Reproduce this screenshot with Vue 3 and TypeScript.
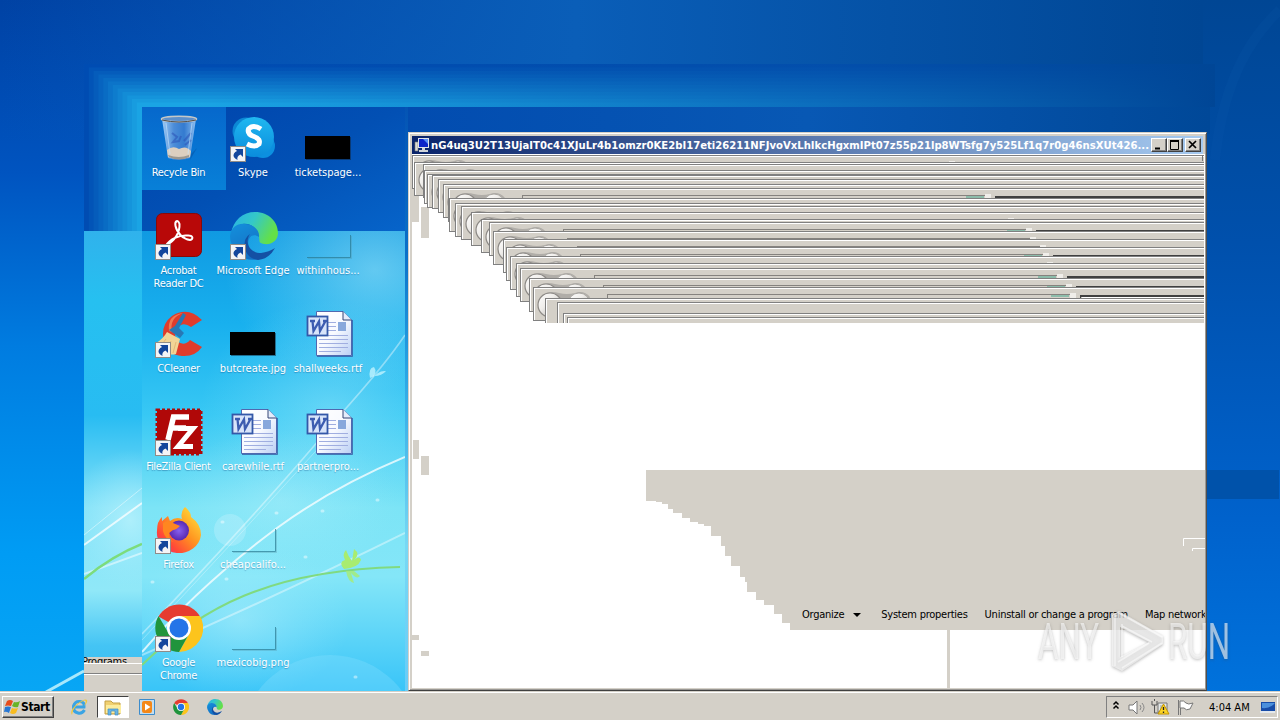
<script setup lang="ts">
interface Shortcut {
  kind: string
  label: string
  linked?: boolean
  selected?: boolean
}

const columns: Shortcut[][] = [
  [
    { kind: 'bin', label: 'Recycle Bin', selected: true },
    { kind: 'acrobat', label: 'Acrobat Reader DC', linked: true },
    { kind: 'ccleaner', label: 'CCleaner', linked: true },
    { kind: 'filezilla', label: 'FileZilla Client', linked: true },
    { kind: 'firefox', label: 'Firefox', linked: true },
    { kind: 'chrome', label: 'Google Chrome', linked: true },
  ],
  [
    { kind: 'skype', label: 'Skype', linked: true },
    { kind: 'edge', label: 'Microsoft Edge', linked: true },
    { kind: 'black', label: 'butcreate.jpg' },
    { kind: 'word', label: 'carewhile.rtf' },
    { kind: 'blank', label: 'cheapcalifo...' },
    { kind: 'blank', label: 'mexicobig.png' },
  ],
  [
    { kind: 'black', label: 'ticketspage...' },
    { kind: 'blank', label: 'withinhous...' },
    { kind: 'word', label: 'shallweeks.rtf' },
    { kind: 'word', label: 'partnerpro...' },
  ],
]

const title =
  'nG4uq3U2T13UjaIT0c41XJuLr4b1omzr0KE2bI17eti26211NFJvoVxLhIkcHgxmIPt07z55p21lp8WTsfg7y525Lf1q7r0g46nsXUt426...'

/* Nested L-shaped bands of the drag trail, from dark outer edge to bright inner edge */
const bands = Array.from({ length: 12 }, (_, i) => {
  const t = i / 11
  const mix = (a: number, b: number) => Math.round(a + (b - a) * t)
  return {
    d: `M${84 + i * 4.8} 231V${64 + i * 3.5}H1215V107H142V231Z`,
    fill: `rgb(${mix(0, 26)}, ${mix(76, 164)}, ${mix(178, 228)})`,
  }
})

/* Leftover frames of the dragged window, relative to the client area */
const frames: [number, number][] = [
  [0, 1], [2, 8], [11, 10], [12, 16], [15, 20], [20, 21], [26, 25], [31, 30], [36, 34],
  [37, 44], [43, 49], [49, 52], [59, 58], [69, 65], [77, 68], [81, 77], [91, 85],
  [94, 93], [98, 102], [104, 109], [108, 114], [117, 124], [121, 133],
]
const bareFrames: [number, number][] = [[133, 144], [145, 148], [151, 159], [155, 163]]

const menu = ['Organize', 'System properties', 'Uninstall or change a program', 'Map network']
</script>

<template>
  <div class="screen">
    <svg class="wallpaper" width="1280" height="692" viewBox="0 0 1280 692">
      <defs>
        <linearGradient id="base" x1="0" y1="0" x2="0" y2="1">
          <stop offset="0" stop-color="#0042a4" />
          <stop offset=".25" stop-color="#0054c0" />
          <stop offset=".5" stop-color="#007ce0" />
          <stop offset=".8" stop-color="#009cf4" />
          <stop offset="1" stop-color="#08a6f4" />
        </linearGradient>
        <linearGradient id="sky" x1="0" y1="0" x2="1" y2="0">
          <stop offset="0" stop-color="#0a60bc" stop-opacity="0" />
          <stop offset=".45" stop-color="#0a5eb8" />
          <stop offset=".94" stop-color="#004694" />
        </linearGradient>
        <linearGradient id="east" x1="0" y1="0" x2="0" y2="1">
          <stop offset="0" stop-color="#004694" />
          <stop offset=".35" stop-color="#0050ac" />
          <stop offset=".75" stop-color="#0062cc" />
          <stop offset="1" stop-color="#0072dc" />
        </linearGradient>
        <linearGradient id="fade" x1="0" y1="0" x2="1" y2="0">
          <stop offset=".1" stop-color="#0450a8" stop-opacity="0" />
          <stop offset=".65" stop-color="#0450a8" stop-opacity=".65" />
          <stop offset="1" stop-color="#004696" />
        </linearGradient>
        <linearGradient id="band" x1="0" y1="0" x2="1" y2="0">
          <stop offset="0" stop-color="#024cb0" />
          <stop offset=".5" stop-color="#0858b4" />
          <stop offset="1" stop-color="#004898" />
        </linearGradient>
        <linearGradient id="strip" x1="0" y1="0" x2="0" y2="1">
          <stop offset="0" stop-color="#30b2ec" />
          <stop offset=".15" stop-color="#26c0f0" />
          <stop offset=".4" stop-color="#28bcf2" />
          <stop offset=".6" stop-color="#84e2f8" />
          <stop offset=".78" stop-color="#90e8f8" />
          <stop offset=".9" stop-color="#44c4f4" />
          <stop offset="1" stop-color="#36bcf0" />
        </linearGradient>
        <linearGradient id="inner" x1="0" y1="0" x2="0" y2="1">
          <stop offset="0" stop-color="#109ae2" />
          <stop offset=".2" stop-color="#18b0ee" />
          <stop offset=".4" stop-color="#38c8f4" />
          <stop offset=".6" stop-color="#7ce4f6" />
          <stop offset=".75" stop-color="#84e6f8" />
          <stop offset="1" stop-color="#38c4f8" />
        </linearGradient>
        <linearGradient id="seam" x1="0" y1="0" x2="0" y2="1">
          <stop offset="0" stop-color="#0454b4" />
          <stop offset=".25" stop-color="#0a70c8" />
          <stop offset=".45" stop-color="#28a4e4" />
          <stop offset=".75" stop-color="#78d8f4" />
          <stop offset="1" stop-color="#68ccf8" />
        </linearGradient>
        <radialGradient id="glow">
          <stop offset="0" stop-color="#b8f2fc" stop-opacity=".8" />
          <stop offset="1" stop-color="#a0ecfc" stop-opacity="0" />
        </radialGradient>
        <linearGradient id="dusk" x1="0" y1="0" x2="1" y2="1">
          <stop offset="0" stop-color="#0044ac" />
          <stop offset=".5" stop-color="#0250b4" />
          <stop offset="1" stop-color="#0664ca" />
        </linearGradient>
        <clipPath id="innerClip"><rect x="142" y="231" width="263" height="461" /></clipPath>
        <clipPath id="stripClip"><rect x="84" y="231" width="58" height="461" /></clipPath>
      </defs>
      <rect width="1280" height="692" fill="url(#base)" />
      <rect width="1280" height="140" fill="url(#sky)" />
      <rect x="1203" width="77" height="692" fill="url(#east)" />
      <path d="M1215 160Q1225 60 1280 10" stroke="#1464b8" stroke-width="10" opacity=".12" fill="none" />
      <rect x="1207" y="470" width="72" height="29" fill="#0052aa" />

      <path v-for="(step, i) in bands" :key="i" :d="step.d" :fill="step.fill" />
      <rect x="84" y="64" width="1131" height="43" fill="url(#fade)" />
      <rect x="405" y="107" width="805" height="27" fill="url(#band)" />

      <rect x="84" y="231" width="58" height="461" fill="url(#strip)" />
      <g clip-path="url(#stripClip)" fill="none" stroke="#fff">
        <ellipse cx="130" cy="520" rx="60" ry="70" fill="url(#glow)" stroke="none" />
        <path d="M84 545L142 503" stroke-width="2" opacity=".75" />
        <path d="M84 535L142 488" opacity=".45" />
        <path d="M84 574L142 553" stroke-width="2" opacity=".5" />
        <path d="M84 579Q112 556 142 544" stroke="#7cdc7c" stroke-width="2.500" />
      </g>
      <path d="M46 692L84 671" stroke="#a8e8fc" stroke-width="3" />

      <rect x="142" y="107" width="263" height="124" fill="url(#dusk)" />
      <rect x="142" y="231" width="263" height="461" fill="url(#inner)" />
      <g clip-path="url(#innerClip)" fill="none" stroke="#fff">
        <ellipse cx="375" cy="270" rx="150" ry="120" fill="url(#glow)" opacity=".6" stroke="none" />
        <ellipse cx="330" cy="410" rx="130" ry="110" fill="url(#glow)" opacity=".45" stroke="none" />
        <ellipse cx="280" cy="500" rx="120" ry="70" fill="url(#glow)" opacity=".5" stroke="none" />
        <ellipse cx="240" cy="620" rx="110" ry="80" fill="url(#glow)" opacity=".6" stroke="none" />
        <circle cx="330" cy="745" r="90" fill="#8ce2ff" opacity=".3" stroke="none" />
        <circle cx="230" cy="530" r="16" fill="#d0f6ff" opacity=".3" stroke="none" />
        <path d="M142 652Q200 585 277 528Q333 487 405 457" stroke-width="2" opacity=".75" />
        <path d="M142 634Q270 500 340 415Q385 365 405 335" stroke-width="1.600" opacity=".4" />
        <path d="M142 640Q240 535 335 430" opacity=".3" />
        <path d="M142 655Q290 590 405 533" stroke-width="2" opacity=".4" />
        <path d="M142 665C200 608 270 570 400 567" stroke="#80da80" stroke-width="2" />
        <g fill="#a8ec70" stroke="none">
          <path d="M344 569Q338 562 345 560Q342 554 346 550Q348 556 352 561L354 549Q361 554 354 560Q360 555 361 560Q358 568 344 569Z" />
          <path d="M346 571Q348 582 354 583L351 573Q357 580 360 576L354 571Z" opacity=".8" />
        </g>
        <path d="M370 378Q368 368 374 367Q378 372 371 380Q378 370 386 371Q382 376 374 376Z" fill="#d0f8ff" opacity=".7" stroke="none" />
        <path d="M222 522h1M276 513h1M305 557h1M226 579h1M322 511h1M377 500h1M152 582h1M355 677h1" stroke-width="3" stroke-linecap="round" opacity=".45" />
      </g>
      <rect x="405" y="107" width="3" height="585" fill="url(#seam)" />
    </svg>

    <svg class="symbols" width="0" height="0">
      <defs>
        <linearGradient id="gSkype" x2="0" y2="1"><stop stop-color="#20b8f0" /><stop offset="1" stop-color="#0a8cdc" /></linearGradient>
        <linearGradient id="gEdge" x2="1" y2=".4"><stop stop-color="#28b0e8" /><stop offset=".5" stop-color="#34c8c8" /><stop offset="1" stop-color="#64e048" /></linearGradient>
        <linearGradient id="gEdgeLow" x2=".5" y2="1"><stop stop-color="#1490dc" /><stop offset="1" stop-color="#1470c4" /></linearGradient>
        <linearGradient id="gFox" x1="1" x2="0" y2="1"><stop stop-color="#fff040" /><stop offset=".45" stop-color="#ff9420" /><stop offset=".75" stop-color="#ff4838" /><stop offset="1" stop-color="#e42090" /></linearGradient>
        <radialGradient id="gPurple"><stop stop-color="#8860f0" /><stop offset="1" stop-color="#5828b0" /></radialGradient>
        <linearGradient id="gBin" x2="1"><stop stop-color="#9ecaf4" /><stop offset=".35" stop-color="#4b8cd8" /><stop offset=".65" stop-color="#347bd0" /><stop offset="1" stop-color="#8abdf0" /></linearGradient>
        <linearGradient id="gPage" x2="1" y2="1"><stop stop-color="#fff" /><stop offset=".5" stop-color="#f8faff" /><stop offset="1" stop-color="#bacff4" /></linearGradient>
        <symbol id="bin" viewBox="0 0 48 48">
          <path d="M36 40L42 34 35 46Z" fill="#05408a" opacity=".35" />
          <path d="M7 5L13 44Q24 48 35 44L41 5Z" fill="url(#gBin)" />
          <path d="M12 36Q18 31 24 35Q31 31 36 37L35 43Q24 47 13 43Z" fill="#dccfc0" />
          <path d="M14 43Q24 48 34 43V41Q24 45 13 41Z" fill="#9c9890" />
          <path d="M17 19l5 4-4 5 6-1 2-5M29 27l7-8M30 31l6-5" stroke="#284cb4" stroke-width="2" fill="none" opacity=".5" />
          <path d="M11 9L15 40M37 9L33 40" stroke="#c8e4fc" opacity=".6" />
          <ellipse cx="24" cy="5" rx="17.500" ry="2.800" fill="#5c90cc" stroke="#c4c8c8" stroke-width="1.600" />
          <path d="M7 6Q24 10 41 6" stroke="#504c48" fill="none" />
        </symbol>
        <symbol id="skype" viewBox="0 0 48 48">
          <circle cx="16" cy="17" r="13.500" fill="#0c88d4" /><circle cx="33" cy="32" r="12" fill="#0c90e0" />
          <circle cx="24" cy="23" r="20" fill="url(#gSkype)" />
          <path d="M31 15Q23 10 18.500 15Q17 20 24 22.500Q31 25 29 30Q25 34 17 30" fill="none" stroke="#fff" stroke-width="5" />
        </symbol>
        <symbol id="acrobat" viewBox="0 0 48 48">
          <rect x="1.500" y="1.500" width="45" height="43" rx="6" fill="#b80808" stroke="#880808" />
          <path d="M11 33.500C20 29 25 20 24.500 12C23 7 19.500 9 20.500 14C22 21 28 27 35 28C39 27 38 23 32 23.500C24 23 15 27 11 33.500Z" fill="none" stroke="#fff" stroke-width="2" />
        </symbol>
        <symbol id="edge" viewBox="0 0 48 48">
          <path d="M1 22C3 8 13 0 25 0C39 0 48 10 48 21C48 29 41 33 34 32C28 31 30 29 29 25C28 16 20 11 13 12Q5 14 1 22Z" fill="url(#gEdge)" />
          <path d="M0 24C1 15 8 11 15 12C24 12 30 19 29 25C22 20 16 27 19 36Q23 44 34 46Q14 52 5 38Q0 31 0 24Z" fill="url(#gEdgeLow)" />
          <path d="M20 22C14 31 20 41 31 41Q39 40 45 36Q39 47 28 48Q16 46 14.500 34Q14 26 20 22Z" fill="#1450a4" />
        </symbol>
        <symbol id="ccleaner" viewBox="0 0 48 48">
          <path d="M47 10L36 17Q28 11 22 18Q18 24 22 31Q29 37 35 30L47 37Q40 47 27 46Q13 45 9 32Q5 15 17 6Q33-4 47 10Z" fill="#e03c2c" />
          <path d="M14 21Q12 5 28 3Q14 8 17 22Z" fill="#f07850" />
          <path d="M12 22L25 29 21 44Q8 47 1 33Q8 29 12 22Z" fill="#f2d496" /><path d="M11 29L5 37M16 31L11 42M21 32L18 43" stroke="#e4b878" />
          <path d="M14 20L25 28 29 23 24 18 31 5 28 3 20 16Z" fill="#2878b4" />
        </symbol>
        <symbol id="filezilla" viewBox="0 0 48 48">
          <rect x="2" y="2" width="44" height="44" fill="#b00808" stroke="#b00808" stroke-width="3" stroke-dasharray="3 2" />
          <path d="M13 32L18.500 9H34M17 20H31" fill="none" stroke="#fff" stroke-width="5.500" />
          <path d="M23 20.500H38L23 38.500H38" fill="none" stroke="#fff" stroke-width="5" />
        </symbol>
        <symbol id="firefox" viewBox="0 0 48 48">
          <path d="M30 1Q36 6 36 11Q46 18 46 29A22 20 0 1 1 2 25Q2 15 7 11V15L13 10L15 15Q21 10 27 13Q25 6 30 1Z" fill="url(#gFox)" />
          <circle cx="24" cy="24.500" r="10" fill="url(#gPurple)" />
          <path d="M8 17Q13 13 18 17L25 20Q21 24 18 24L14 27Q14 34 19 36Q10 34 8 25Z" fill="#ff8620" />
        </symbol>
        <symbol id="chrome" viewBox="0 0 48 48">
          <path d="M24 24L3.500 12.500A24 24 0 0 1 45 12.500Z" fill="#e63c30" />
          <path d="M24 12H45A24 24 0 0 1 24 48L34 30Z" fill="#fcc41c" />
          <path d="M3.500 12A24 24 0 0 0 24 48L34 30 14 30Z" fill="#20943c" />
          <circle cx="24" cy="24" r="12" fill="#fff" /><circle cx="24" cy="24" r="9.500" fill="#2474e8" />
        </symbol>
        <symbol id="word" viewBox="0 0 48 48">
          <path d="M11.500 1.500H38L46.500 10V45.500H11.500Z" fill="url(#gPage)" stroke="#5068b0" />
          <path d="M47.500 10V46.500H12" fill="none" stroke="#304c98" opacity=".7" />
          <path d="M38 1.500V10H46.500" fill="#e4ecfa" stroke="#344474" />
          <path d="M23 12.500H31M23 16.500H31M23 20.500H31M14 25.500H43M14 29.500H43M14 33.500H43M14 37.500H43M14 41.500H36" stroke="#a0aee0" />
          <rect x="33" y="12" width="8" height="9" fill="#88a8dc" />
          <rect x="2.500" y="6.500" width="20" height="19" fill="#d8e4fa" stroke="#3458a8" stroke-width="1.800" />
          <path d="M5 11H10M7.500 11L8.500 21 14 11.500 15 21 20.500 11M18 11H22" fill="none" stroke="#3c5cb0" stroke-width="2.300" />
        </symbol>
        <symbol id="black" viewBox="0 0 48 48"><rect x="1" y="23" width="45" height="23" fill="#123" opacity=".5" /><rect y="22" width="45" height="23" fill="#000" /></symbol>
        <symbol id="blank" viewBox="0 0 48 48"><path d="M2 45.500H45.500V23" fill="none" stroke="#287890" opacity=".7" /><path d="M3 46.500H46.500V24" fill="none" stroke="#5090a0" opacity=".3" /></symbol>
        <symbol id="link" viewBox="0 0 16 16">
          <rect x=".5" y=".5" width="15" height="15" fill="#f4f4f6" stroke="#908c88" />
          <path d="M5 3H13V11L10.500 8.500Q6.500 10 7.500 14Q2 11 4 7.500Q5 5.500 7 5Z" fill="#14469c" />
        </symbol>
      </defs>
    </svg>

    <div class="trail">
      <span>Programs</span><i></i><b></b>
    </div>

    <div class="desktop">
      <div v-for="(column, c) in columns" :key="c" class="column">
        <div v-for="item in column" :key="item.label" class="shortcut" :class="{ selected: item.selected }">
          <div class="art">
            <svg width="48" height="48"><use :href="'#' + item.kind" /></svg>
            <svg v-if="item.linked" class="badge" width="16" height="16"><use href="#link" /></svg>
          </div>
          <span class="label">{{ item.label }}</span>
        </div>
      </div>
    </div>

    <section class="window">
      <header>
        <svg class="computer" width="16" height="16" viewBox="0 0 16 16">
          <path d="M1 5H4V14H1Z" fill="#dcdcd4" stroke="#777" stroke-width=".6" />
          <path d="M4 1H15V11H4Z" fill="#e0e4e8" /><path d="M5 2H14V10H5Z" fill="#0c24c8" /><path d="M9 2H14V7Z" fill="#5890f8" />
          <path d="M8 11H11V13H14V15H5V13H8Z" fill="#d0d4d8" />
        </svg>
        <svg class="title" width="719" height="18">
          <text x="0" y="13" textLength="718" lengthAdjust="spacingAndGlyphs">{{ title }}</text>
        </svg>
        <button><svg width="16" height="14"><path d="M4 10.500H9" stroke="#000" stroke-width="2" /></svg></button>
        <button><svg width="16" height="14"><path d="M3.500 3V11.500H11.500V3ZM3 3H12" fill="none" stroke="#000" /><path d="M3 3H12" stroke="#000" stroke-width="2" /></svg></button>
        <button class="close"><svg width="16" height="14"><path d="M4 3L11 10M11 3L4 10" stroke="#000" stroke-width="1.700" /></svg></button>
      </header>

      <svg class="client" width="793" height="534" viewBox="0 0 793 534">
        <defs>
          <clipPath id="framesClip"><rect width="792" height="169" /></clipPath>
          <linearGradient id="orb" x2="1" y2="1"><stop stop-color="#fff" /><stop offset=".4" stop-color="#efedea" /><stop offset="1" stop-color="#aaa8a4" /></linearGradient>
        </defs>
        <rect width="793" height="534" fill="#fff" />
        <path d="M0 35H7V68H0ZM9 53H17V84H9ZM1 286H7V305H1ZM9 302H17V321H9ZM0 481H7V486H0ZM9 497H17V502H9Z" fill="#d4d0c8" />
        <g clip-path="url(#framesClip)" shape-rendering="crispEdges">
          <g v-for="([x, y], i) in frames" :key="i" :transform="`translate(${x} ${y})`">
            <rect width="900" height="34" fill="#808080" />
            <path d="M1 33V1H900V33Z" fill="#fff" />
            <rect x="2" y="2" width="900" height="31" fill="#d4d0c8" />
            <g shape-rendering="auto">
              <path d="M9 8Q16 3 26 6Q34 8 42 6Q51 3 57 10L54 17H12Z" fill="#b0ada8" />
              <circle cx="17" cy="18" r="12" fill="url(#orb)" stroke="#8c8985" stroke-width="1.200" />
              <circle cx="46" cy="17" r="11" fill="url(#orb)" stroke="#aaa7a2" />
            </g>
            <path d="M74 7H537V8H75V12H74Z" fill="#85827e" />
            <path d="M518 8H536V10H518Z" fill="#8cbcaa" />
            <rect x="537" y="6" width="6" height="5" fill="#f0eeea" />
            <path d="M547 8H900V10H548V12H547Z" fill="#404040" />
            <rect x="549" y="10" width="360" height="5" fill="#fff" />
          </g>
          <g v-for="([x, y], i) in bareFrames" :key="'b' + i" :transform="`translate(${x} ${y})`">
            <rect width="900" height="34" fill="#808080" />
            <rect x="1" y="1" width="900" height="33" fill="#fff" />
            <rect x="2" y="2" width="900" height="32" fill="#d4d0c8" />
          </g>
        </g>
        <path d="M790.500 1V7" stroke="#777" />
        <path d="M234 316V347H244V348H250V350H256V355H261V359H270V364H278V368H286V370H292V372H299V382H309V392H313V402H319V412H328V423H333V428H335V438H344V446H352V451H362V460H370V469H378V476H793V316Z" fill="#d4d0c8" />
        <path d="M535 476H538V534H535Z" fill="#d4d0c8" />
        <path d="M771.500 392V384.500H793M780.500 397V394.500H793" fill="none" stroke="#fff" />
      </svg>
      <nav class="menu">
        <template v-for="(entry, i) in menu" :key="entry">
          <span :class="'entry' + i">{{ entry }}</span>
          <i v-if="i === 0"></i>
        </template>
      </nav>
    </section>

    <svg class="watermark" width="210" height="76" viewBox="0 0 210 76">
      <text x="9" y="51" textLength="61" lengthAdjust="spacingAndGlyphs">ANY</text>
      <text x="139" y="51" textLength="62" lengthAdjust="spacingAndGlyphs">RUN</text>
      <path fill-rule="evenodd" d="M83 7L90 3 134 28V36L93 63 83 58ZM91 19V49L120 34Z" />
      <path class="line" d="M86 6V58M93 16V49M90 5L133 29M93 18L123 34M133 35L93 60M120 35L89 54" />
    </svg>

    <footer class="taskbar">
      <button class="start">
        <svg width="17" height="16" viewBox="0 0 17 16">
          <path d="M3 2Q6 0 9 2L7 7Q4 6 1 7Z" fill="#e84c1c" /><path d="M10 3Q13 4 16 2L14 8Q11 9 8 7Z" fill="#68b428" />
          <path d="M1 8Q4 7 7 8L5 14Q2 12 0 13Z" fill="#2878d4" /><path d="M8 9Q11 10 14 9L12 14Q9 16 6 14Z" fill="#f8bc20" />
        </svg>Start
      </button>
      <span class="quick ie">
        <svg width="18" height="18" viewBox="0 0 18 18"><path d="M14.500 12Q12 16 8 15Q3 14 3.500 8Q5 3 10 3.500Q15 4 14 9H5" fill="none" stroke="#3aa4e4" stroke-width="3" /><path d="M2 17Q-1 13 7 6Q15 0 17 2Q18 4 14 8Q18 1 13 3Q3 8 2 17Z" fill="#f0c83c" /></svg>
      </span>
      <span class="quick pressed">
        <svg width="18" height="17" viewBox="0 0 18 17"><path d="M1 2H7L9 4H16V15H1Z" fill="#f0d070" stroke="#c4a044" /><path d="M2 6H17V14H2Z" fill="#fcec9c" /><path d="M4 16V10H14V16H11V12H7V16Z" fill="#68b4e4" stroke="#408cc4" stroke-width=".7" /></svg>
      </span>
      <span class="quick media">
        <svg width="16" height="16" viewBox="0 0 16 16"><path d="M.5 .5H15.500V15.500H.5Z" fill="#c4def0" stroke="#3c8ccc" /><rect x="3" y="2" width="10" height="12" rx="2" fill="#f48818" /><path d="M6 4.500L11.500 8 6 11.500Z" fill="#fff" /></svg>
      </span>
      <span class="quick chromeTask"><svg width="16" height="16"><use href="#chrome" /></svg></span>
      <span class="quick edgeTask"><svg width="16" height="16"><use href="#edge" /></svg></span>
      <div class="tray">
        <svg width="94" height="20" viewBox="0 0 94 20">
          <path d="M6.500 7.500L9 5 11.500 7.500M6.500 11.500L9 9 11.500 11.500" fill="none" stroke="#000" stroke-width="1.500" />
          <path d="M22 8H26L30 4V17L26 13H22Z" fill="#fff" stroke="#777" /><path d="M33 8Q35 10.500 33 13M35 6Q39 10.500 35 15" stroke="#888" fill="none" />
          <path d="M51 6H60V15H51Z" fill="#e4e8e8" stroke="#777" /><path d="M53 8H58V12H53Z" fill="#bcc4c4" /><path d="M45 4V8H50V4M47.500 8V16H52M47.500 2V4" fill="none" stroke="#555" />
          <path d="M56.500 7L62 17H51Z" fill="#fcd424" stroke="#c49400" /><path d="M56.500 10V13M56.500 14.500V16" stroke="#222" stroke-width="1.300" />
          <path d="M71.500 3V18M73.500 4V18" stroke="#777" /><path d="M73 4Q77 3 79 6Q81 8 86 6L83 12Q79 14 77 11H73Z" fill="#fff" stroke="#777" />
        </svg>
        <time>4:04 AM</time>
        <svg class="show" width="16" height="16" viewBox="0 0 16 16"><path d="M1 3H15V12H1Z" fill="#184ca8" /><path d="M2 4H15Q10 10 2 9Z" fill="#4c90dc" /><path d="M0 13H15" stroke="#e8f0f8" stroke-width="1.500" /></svg>
      </div>
    </footer>
  </div>
</template>

<style>
body { overflow: hidden; }
</style>

<style scoped>
.screen {
  position: relative;
  width: 1280px;
  height: 720px;
  overflow: hidden;
  font: 11px/13px "DejaVu Sans Condensed", "DejaVu Sans", sans-serif;
  letter-spacing: -0.25px;
  color: #000;
}
.wallpaper, .symbols { position: absolute; left: 0; top: 0; }

.trail {
  position: absolute;
  left: 84px;
  top: 657px;
  width: 58px;
  height: 35px;
  background: #d4d0c8;
  border-bottom: 1px solid #404040;
  box-sizing: border-box;
}
.trail span { display: block; height: 6px; overflow: hidden; line-height: 10px; text-indent: -2px; }
.trail i { display: block; height: 9px; border-top: 1px solid #fff; border-bottom: 1px solid #808080; }
.trail b { display: block; height: 1px; background: #fff; }

.desktop { position: absolute; left: 142px; top: 107px; display: flex; }
.column { width: 75px; }
.shortcut {
  width: 84px;
  height: 98px;
  margin-left: -5px;
  box-sizing: border-box;
  padding-top: 7px;
  display: flex;
  flex-direction: column;
  align-items: center;
}
.column:first-child .shortcut { width: 73px; margin-left: 0; }
.column:first-child .selected {
  width: 84px;
  height: 83px;
  margin-bottom: 15px;
  padding-right: 11px;
  background: linear-gradient(#0668cc, #0880d8);
}
.art { position: relative; width: 48px; height: 48px; }
.art svg { display: block; }
.art .badge { position: absolute; left: 0; bottom: 0; }
.label {
  margin-top: 4px;
  margin-right: 2px;
  letter-spacing: 0;
  text-align: center;
  white-space: nowrap;
  color: #fff;
  text-shadow: 0 1px 1px rgba(0, 50, 110, 0.35);
}
.column:first-child .label {
  max-width: 68px;
  margin-right: 0;
  letter-spacing: -0.32px;
  white-space: normal;
}

.window {
  position: absolute;
  left: 408px;
  top: 132px;
  width: 799px;
  height: 559px;
  box-sizing: border-box;
  padding: 3px 2px 2px 3px;
  background: #d4d0c8;
  border: 1px solid;
  border-color: #d4d0c8 #505050 #404040 #d4d0c8;
  box-shadow: inset 1px 1px #fff, inset -1px -1px #9a9894;
}
header {
  width: 791px;
  height: 18px;
  display: flex;
  align-items: center;
  background: linear-gradient(90deg, #0a246a, #a6caf0);
}
.computer { margin: 0 1px 0 2px; flex: none; }
.title { flex: none; font: bold 11px "DejaVu Sans Condensed", sans-serif; letter-spacing: 0; fill: #fff; }
button {
  box-sizing: border-box;
  width: 16px;
  height: 14px;
  padding: 0;
  border: 1px solid;
  border-color: #fff #404040 #404040 #fff;
  background: #d4d0c8;
  flex: none;
  box-shadow: inset -1px -1px #808080;
}
button svg { display: block; margin: -1px; }
.title + button { margin-left: 1px; }
.close { margin-left: 2px; }
.client { display: block; }
.menu {
  position: absolute;
  left: 393px;
  top: 475px;
  width: 403px;
  height: 14px;
  display: flex;
  overflow: hidden;
  white-space: nowrap;
}
.menu span { flex: none; }
.menu i {
  margin: 5px 20px 0 9px;
  height: 0;
  border: 4px solid transparent;
  border-top-color: #000;
  border-bottom: 0;
}
.entry1, .entry2 { margin-right: 17px; }

.watermark {
  position: absolute;
  left: 1029px;
  top: 608px;
  fill: #fff;
  fill-opacity: 0.6;
  font: 50px Roboto, sans-serif;
  letter-spacing: 0;
  filter: drop-shadow(0 1px 1.5px rgba(70, 70, 70, 0.55));
}
.line { fill: none; stroke: #fff; stroke-opacity: 0.55; stroke-width: 1.5; }

.taskbar {
  position: absolute;
  left: 0;
  top: 691px;
  width: 1280px;
  height: 29px;
  box-sizing: border-box;
  padding-top: 5px;
  display: flex;
  align-items: flex-start;
  background: #d4d0c8;
  box-shadow: inset 0 1px #d4d0c8, inset 0 2px #fff;
}
.start {
  width: 52px;
  height: 22px;
  margin-left: 2px;
  display: flex;
  align-items: center;
  font: bold 12px "DejaVu Sans Condensed", sans-serif;
  letter-spacing: -0.4px;
}
.start svg { margin: 0 0 0 1px; }
.quick { height: 22px; display: flex; align-items: center; justify-content: center; }
.quick.ie { width: 18px; margin-left: 16px; }
.quick.pressed { width: 32px; box-sizing: border-box; margin-left: 9px; background: #fff; border: 1px solid; border-color: #404040 #fff #fff #404040; }
.quick.media { margin-left: 10px; }
.quick.chromeTask { margin-left: 18px; }
.quick.edgeTask { margin-left: 18px; }
.tray {
  box-sizing: border-box;
  width: 172px;
  height: 22px;
  margin-left: auto;
  margin-right: 2px;
  display: flex;
  align-items: center;
  border: 1px solid;
  border-color: #808080 #fff #fff #808080;
}
.tray time { margin-left: 8px; width: 43px; letter-spacing: 0; white-space: nowrap; }
.tray .show { margin-left: 8px; }
</style>
